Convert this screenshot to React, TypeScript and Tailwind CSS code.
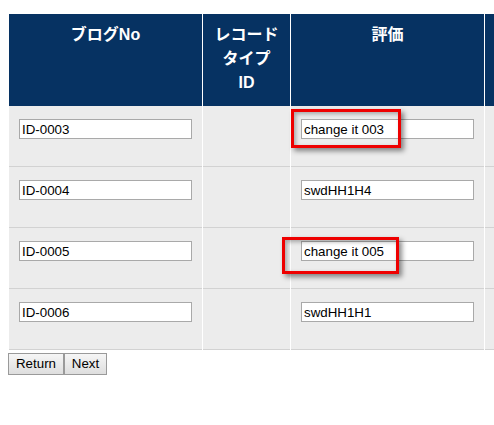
import React from 'react';

const rows = [
  { id: 'ID-0003', review: 'change it 003' },
  { id: 'ID-0004', review: 'swdHH1H4' },
  { id: 'ID-0005', review: 'change it 005' },
  { id: 'ID-0006', review: 'swdHH1H1' },
];

const font = "font-['Liberation_Sans','Noto_Sans_CJK_JP',sans-serif]";

function Field({ value }: { value: string }) {
  return (
    <input
      readOnly
      value={value}
      className={`${font} block w-[173px] h-[20px] border border-[#a9a9a9] bg-white px-[2px] text-[13.33px] text-black outline-none`}
    />
  );
}

export default function App() {
  return (
    <div className={`${font} relative w-[494px] h-[425px] overflow-hidden bg-white pt-[14px] pl-[8px]`}>
      <table className="table-fixed border-separate border-spacing-x-[1px] border-spacing-y-0 w-[646px]">
        <colgroup>
          <col className="w-[193px]" />
          <col className="w-[87px]" />
          <col className="w-[193px]" />
          <col className="w-[168px]" />
        </colgroup>
        <thead>
          <tr>
            <th className="h-[92px] bg-[#063262] align-top pt-[9px] text-[16px] leading-[24px] font-bold text-white">ブログNo</th>
            <th className="h-[92px] bg-[#063262] align-top pt-[9px] text-[16px] leading-[24px] font-bold text-white">
              レコード<br />タイプ<br />ID
            </th>
            <th className="h-[92px] bg-[#063262] align-top pt-[9px] text-[16px] leading-[24px] font-bold text-white">評価</th>
            <th className="h-[92px] bg-[#063262]"></th>
          </tr>
        </thead>
        <tbody>
          {rows.map((r) => (
            <tr key={r.id}>
              <td className="h-[61px] bg-[#ececec] border-b border-[#d2d2d2] align-top pt-[13px] pl-[10px]">
                <Field value={r.id} />
              </td>
              <td className="h-[61px] bg-[#ececec] border-b border-[#d2d2d2]"></td>
              <td className="h-[61px] bg-[#ececec] border-b border-[#d2d2d2] align-top pt-[13px] pl-[10px]">
                <Field value={r.review} />
              </td>
              <td className="h-[61px] bg-[#ececec] border-b border-[#d2d2d2]"></td>
            </tr>
          ))}
        </tbody>
      </table>

      <div className="mt-[3px] flex">
        <button className="h-[22px] w-[56px] border border-[#9a9a9a] bg-gradient-to-b from-[#f6f6f6] to-[#dedede] text-[13.33px] text-black">
          Return
        </button>
        <button className="h-[22px] w-[43px] border border-[#9a9a9a] bg-gradient-to-b from-[#f6f6f6] to-[#dedede] text-[13.33px] text-black">
          Next
        </button>
      </div>

      {/* annotation boxes */}
      <div className="absolute left-[291px] top-[109px] w-[110px] h-[39px] border-[3px] border-[#ee0000] shadow-[3px_3px_5px_rgba(0,0,0,0.45),inset_2px_2px_4px_rgba(0,0,0,0.3)]" />
      <div className="absolute left-[282px] top-[237px] w-[117px] h-[37px] border-[3px] border-[#ee0000] shadow-[3px_3px_5px_rgba(0,0,0,0.45),inset_2px_2px_4px_rgba(0,0,0,0.3)]" />
    </div>
  );
}
